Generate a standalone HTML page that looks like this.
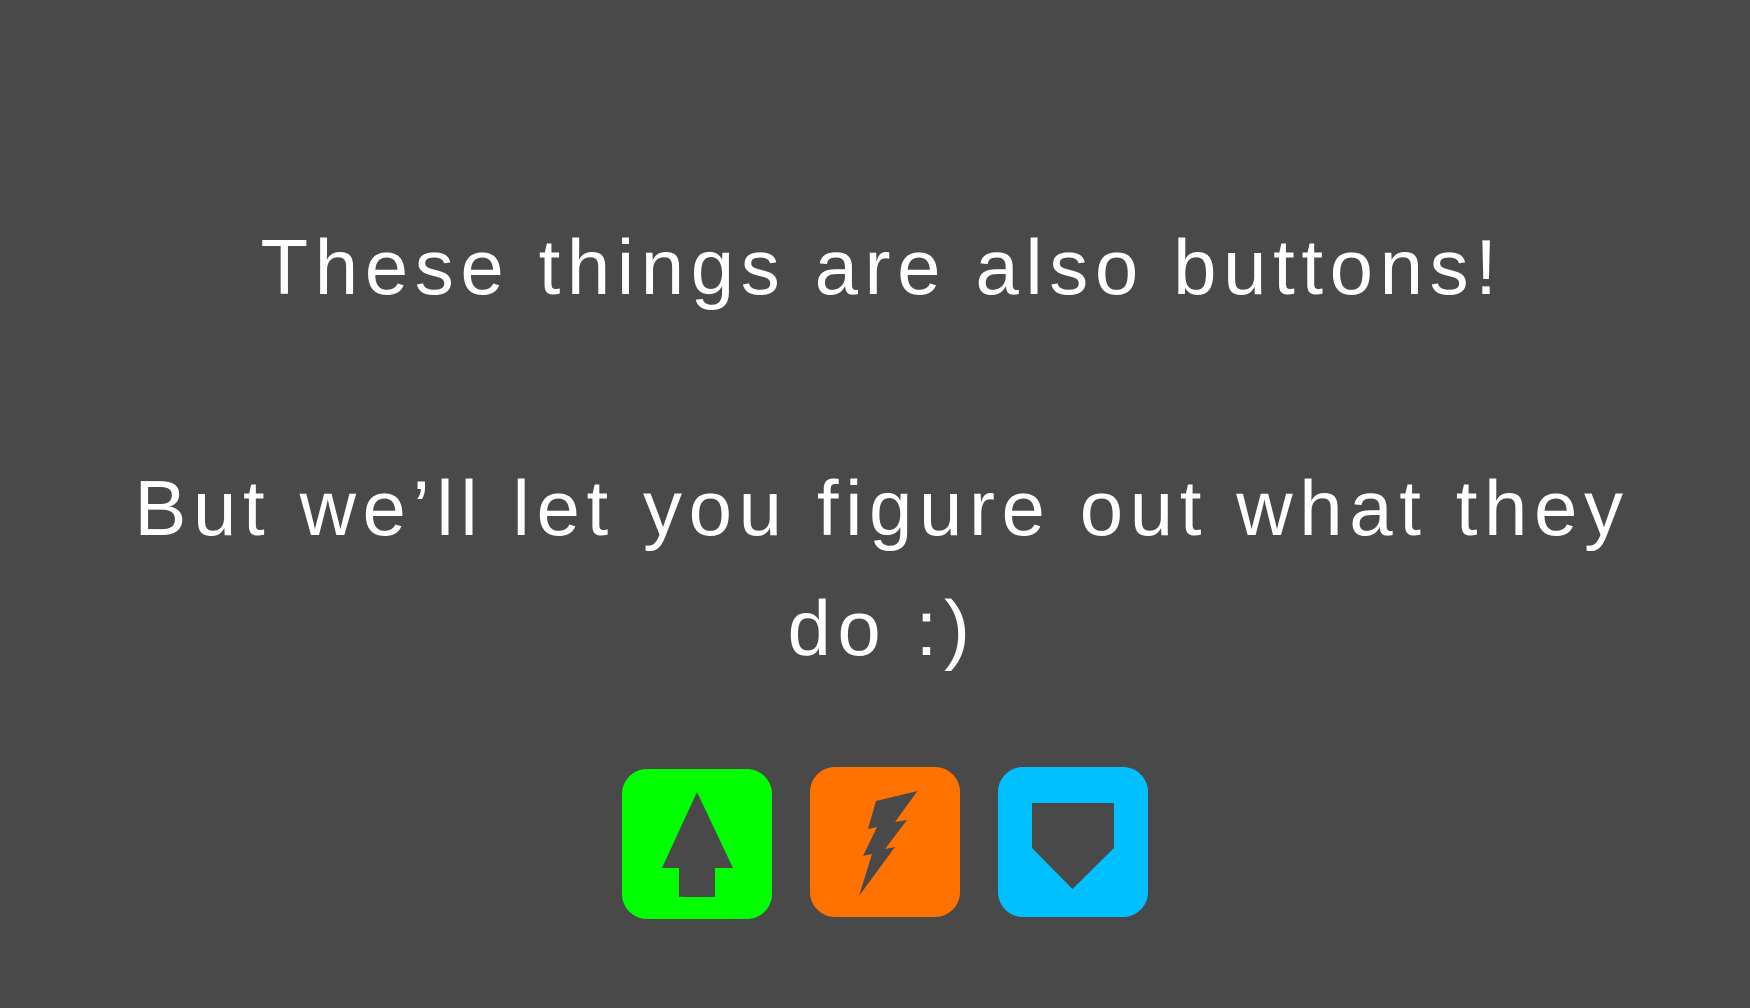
<!DOCTYPE html>
<html><head><style>
html,body{margin:0;padding:0;width:1750px;height:1008px;background:#494949;overflow:hidden}
.t{position:absolute;left:7px;width:1750px;text-align:center;color:#fff;font-family:"Liberation Sans",sans-serif;font-size:78px;line-height:120px;letter-spacing:6.6px;white-space:nowrap;font-weight:normal}
svg{position:absolute;left:0;top:0}
</style></head><body>
<div class="t" style="top:207px">These things are also buttons!</div>
<div class="t" style="top:448px">But we’ll let you figure out what they</div>
<div class="t" style="top:568px">do :)</div>
<svg width="1750" height="1008">
<rect x="622" y="769" width="150" height="150" rx="25" fill="#00ff00"/>
<polygon points="697,792 733,868 715,868 715,897 679,897 679,868 662,868" fill="#494949"/>
<rect x="810" y="767" width="150" height="150" rx="25" fill="#ff7200"/>
<polygon points="917.5,791 876,801 868,829 877,827 863,856 872,854 859,896 895,847 885,849 907,820 895,822" fill="#494949"/>
<rect x="998" y="767" width="150" height="150" rx="25" fill="#00c0ff"/>
<polygon points="1032,803 1114,803 1114,848 1072.5,889 1032,848" fill="#494949"/>
</svg>
</body></html>
